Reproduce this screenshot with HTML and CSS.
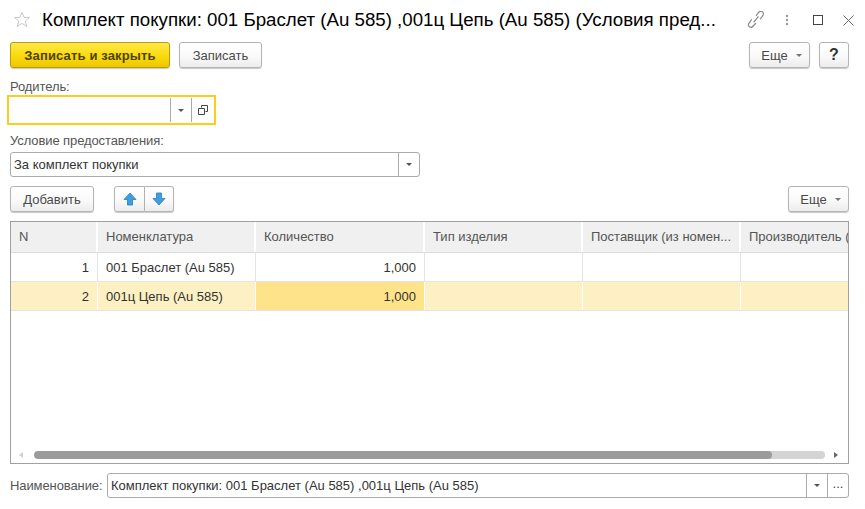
FILE: index.html
```html
<!DOCTYPE html>
<html lang="ru">
<head>
<meta charset="utf-8">
<title>Комплект покупки</title>
<link rel="stylesheet" href="styles.css">
</head>
<body>
<div class="page">
  <header class="titlebar">
    <svg class="star" width="18" height="18" viewBox="0 0 18 18"><path d="M9 1.5l2.2 5h5.3l-4.2 3.5 1.6 5.5L9 12.4l-4.9 3.1 1.6-5.5L1.5 6.500h5.300z" fill="#fff" stroke="#c9c9c9" stroke-width="1"/></svg>
    <h1 class="title">Комплект покупки: 001 Браслет (Au 585) ,001ц Цепь (Au 585) (Условия пред...</h1>
    <div class="winicons">
      <svg class="wi-link" width="18" height="18" viewBox="2 2 15 15" fill="none" stroke="#8a8a8a" stroke-width="1"><path d="M7.500 11.500l4-5M6 9l-2.200 2.800c-1 1.300-.8 2.600.2 3.300s2.300.5 3.200-.6L9.500 12M9.500 6l2-2.600c1-1.200 2.300-1.400 3.300-.7s1.200 2 .2 3.300L13 8.800"/></svg>
      <svg class="wi-dots" width="4" height="12" viewBox="0 0 4 12" fill="#9a9a9a"><circle cx="2" cy="2" r="1.200"/><circle cx="2" cy="6" r="1.200"/><circle cx="2" cy="10" r="1.200"/></svg>
      <span class="wi-max"></span>
      <svg class="wi-close" width="11" height="11" viewBox="0 0 11 11" stroke="#666" stroke-width="1" fill="none"><path d="M.5.500l10 10M10.500.500l-10 10"/></svg>
    </div>
  </header>

  <div class="toolbar">
    <button class="btn btn-primary">Записать и закрыть</button>
    <button class="btn btn-save">Записать</button>
    <span class="spacer"></span>
    <button class="btn btn-more">Еще<i class="caret"></i></button>
    <button class="btn btn-help">?</button>
  </div>

  <label class="label label-parent">Родитель:</label>
  <div class="field field-focus">
    <span class="field-value"></span>
    <span class="field-btn fb-drop"><i class="caret dark"></i></span>
    <span class="field-btn fb-open">
      <svg width="10" height="10" viewBox="0 0 10 10" fill="none" stroke="#444" stroke-width="1"><path d="M3.500 2.500V.5h6v6h-2M.5 3.500h6v6h-6z"/></svg>
    </span>
  </div>

  <label class="label label-cond">Условие предоставления:</label>
  <div class="field field-cond">
    <span class="field-value">За комплект покупки</span>
    <span class="field-btn fb-drop"><i class="caret dark"></i></span>
  </div>

  <div class="toolbar toolbar-table">
    <button class="btn btn-add">Добавить</button>
    <div class="btn-group">
      <button class="btn btn-arrow">
        <svg width="14" height="14" viewBox="0 0 14 14"><path d="M7 1l6 6.500H9.500V13h-5V7.500H1z" fill="#3d9fe0" stroke="#2b7cb6" stroke-width=".8"/></svg>
      </button>
      <button class="btn btn-arrow">
        <svg width="14" height="14" viewBox="0 0 14 14"><path d="M7 13L1 6.500h3.500V1h5v5.500H13z" fill="#3d9fe0" stroke="#2b7cb6" stroke-width=".8"/></svg>
      </button>
    </div>
    <span class="spacer"></span>
    <button class="btn btn-more2">Еще<i class="caret"></i></button>
  </div>

  <div class="table">
    <div class="row row-head">
      <div class="cell c1">N</div>
      <div class="cell c2">Номенклатура</div>
      <div class="cell c3">Количество</div>
      <div class="cell c4">Тип изделия</div>
      <div class="cell c5">Поставщик (из номен...</div>
      <div class="cell c6">Производитель (</div>
    </div>
    <div class="row">
      <div class="cell c1 num">1</div>
      <div class="cell c2">001 Браслет (Au 585)</div>
      <div class="cell c3 num">1,000</div>
      <div class="cell c4"></div>
      <div class="cell c5"></div>
      <div class="cell c6"></div>
    </div>
    <div class="row row-selected">
      <div class="cell c1 num">2</div>
      <div class="cell c2">001ц Цепь (Au 585)</div>
      <div class="cell c3 num active">1,000</div>
      <div class="cell c4"></div>
      <div class="cell c5"></div>
      <div class="cell c6"></div>
    </div>
    <div class="scrollbar">
      <i class="arrow-left"></i>
      <div class="track"><div class="thumb"></div></div>
      <i class="arrow-right"></i>
    </div>
  </div>

  <div class="namerow">
    <label class="label label-name">Наименование:</label>
    <div class="field field-name">
      <span class="field-value">Комплект покупки: 001 Браслет (Au 585) ,001ц Цепь (Au 585)</span>
      <span class="field-btn fb-drop"><i class="caret dark"></i></span>
      <span class="field-btn fb-dots">...</span>
    </div>
  </div>
</div>
</body>
</html>
```
FILE: styles.css
```css
* { box-sizing: border-box; }
html, body { margin: 0; padding: 0; background: #fff; }
body { font-family: "Liberation Sans", Arial, sans-serif; font-size: 13px; color: #333; overflow: hidden; }
.page { width: 865px; height: 509px; display: flex; flex-direction: column; padding: 0 16px 0 10px; }

.titlebar { height: 42px; display: flex; align-items: center; flex: none; padding-bottom: 2px; }
.star { margin: 0 11px 0 3px; flex: none; }
.title { margin: 0; font-size: 18.7px; font-weight: 400; color: #000; white-space: nowrap; width: 690px; flex: none; overflow: hidden; }
.winicons { display: flex; align-items: center; margin-left: 15px; flex: none; }
.wi-dots { margin-left: 20px; }
.wi-max { width: 10px; height: 10px; border: 1px solid #444; margin-left: 24px; display: block; }
.wi-close { margin-left: 20px; }

.toolbar { display: flex; flex: none; height: 26px; }
.spacer { flex: 1; }
.btn {
  font: 13px "Liberation Sans", Arial, sans-serif; color: #4a4a4a; height: 26px; padding: 0; display: flex; align-items: center; justify-content: center;
  border: 1px solid #b5b5b5; border-radius: 3px; background: linear-gradient(#ffffff 0%, #fafafa 55%, #ececec 100%);
  box-shadow: 0 1px 1px rgba(0,0,0,.22);
}
.btn-primary { width: 160px; font-weight: 700; color: #4f4300; border-color: #b99b10; background: linear-gradient(#ffe84a 0%, #fbdc0f 50%, #edc800 100%); letter-spacing: .15px; }
.btn-save { width: 83px; margin-left: 9px; }
.btn-more { width: 61px; padding-left: 4px; }
.btn-help { width: 30px; margin-left: 9px; font-weight: 700; font-size: 16px; color: #333; }
.caret { display: inline-block; width: 0; height: 0; border: 3px solid transparent; border-top: 3px solid #777; border-bottom: 0; margin-left: 8px; }
.caret.dark { border-top-color: #555; margin: 0; }

.label { color: #555; display: block; line-height: 14px; flex: none; letter-spacing: -.1px; }
.label-parent { margin-top: 12px; }
.label-cond { margin-top: 9px; }

.field { display: flex; flex: none; background: #fff; border: 1px solid #ababab; border-radius: 3px; color: #333; }
.field-value { flex: 1; padding: 1px 0 0 3px; white-space: nowrap; overflow: hidden; line-height: 22px; }
.field-btn { flex: none; display: flex; align-items: center; justify-content: center; border-left: 1px solid #ababab; }
.field-focus { width: 209px; height: 30px; margin: 1px 0 0 -3px; border: 2px solid #fccd1e; border-radius: 0; padding: 1px 0; }
.fb-drop { width: 21px; }
.fb-open { width: 23px; }
.field-cond { width: 410px; height: 25px; margin-top: 4px; }
.toolbar-table { margin-top: 9px; }
.btn-add { width: 84px; }
.btn-group { display: flex; margin-left: 20px; }
.btn-arrow { border-radius: 0; }
.btn-arrow:first-child { width: 31px; border-radius: 3px 0 0 3px; }
.btn-arrow:last-child { width: 29px; border-radius: 0 3px 3px 0; border-left: 0; }
.btn-more2 { width: 61px; padding-left: 4px; }

.table { margin-top: 9px; height: 243px; flex: none; border: 1px solid #a0a0a0; display: flex; flex-direction: column; overflow: hidden; }
.row { display: flex; height: 29px; flex: none; border-bottom: 1px solid #e4e4e4; }
.row-head { height: 31px; background: #f0f0f0; border-bottom: 1px solid #dcdcdc; }
.cell { flex: none; padding: 1px 8px 0; line-height: 27px; border-right: 1px solid #e4e4e4; white-space: nowrap; overflow: hidden; color: #333; }
.row-head .cell { padding-top: 0; color: #555; line-height: 29px; border-right: 2px solid #fff; }
.c1 { width: 87px; }
.c2 { width: 158px; }
.c3 { width: 169px; }
.c4 { width: 158px; }
.c5 { width: 158px; }
.c6 { width: 108px; border-right: 0; }
.row-head .c6 { border-right: 0; }
.num { text-align: right; }
.row-selected { background: #fdf0c3; }
.row-selected .cell { border-right-color: #fff; }
.active { background: #fee38a; }

.scrollbar { margin-top: auto; height: 14px; display: flex; align-items: center; padding: 0 0 3px 8px; flex: none; }
.arrow-left { width: 0; height: 0; border: 3px solid transparent; border-right: 4px solid #d0d0d0; border-left: 0; }
.track { width: 791px; height: 8px; margin-left: 11px; background: #d4d4d4; border-radius: 4px; overflow: hidden; }
.thumb { width: 738px; height: 8px; background: #9b9b9b; border-radius: 4px; }
.arrow-right { width: 0; height: 0; border: 3px solid transparent; border-left: 4px solid #666; border-right: 0; margin-left: 9px; }

.namerow { display: flex; align-items: center; margin-top: 9px; flex: none; }
.label-name { width: 97px; white-space: nowrap; }
.field-name { width: 742px; height: 25px; }
.fb-dots { width: 21px; padding-bottom: 4px; color: #444; }
```
